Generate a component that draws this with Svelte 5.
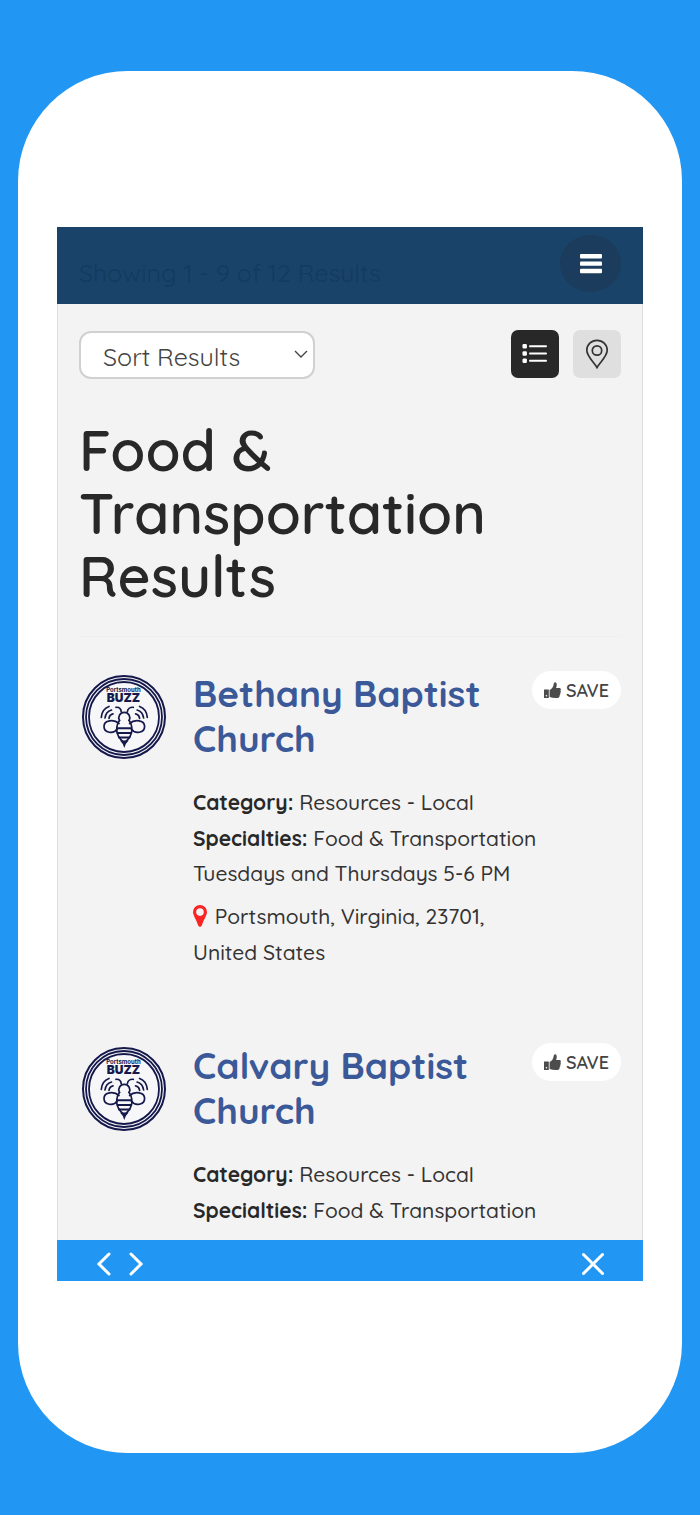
<script lang="ts">
	type Listing = {
		name: string;
		category: string;
		specialties: string;
		hours?: string;
		location?: string;
	};

	const listings: Listing[] = [
		{
			name: 'Bethany Baptist Church',
			category: 'Resources - Local',
			specialties: 'Food & Transportation',
			hours: 'Tuesdays and Thursdays 5-6 PM',
			location: 'Portsmouth, Virginia, 23701, United States'
		},
		{
			name: 'Calvary Baptist Church',
			category: 'Resources - Local',
			specialties: 'Food & Transportation'
		}
	];

	let view = $state('list');
	let saved = $state<string[]>([]);

	function toggleSave(name: string) {
		saved = saved.includes(name) ? saved.filter((n) => n !== name) : [...saved, name];
	}
</script>

<div class="page">
	<div class="phone">
		<div class="screen">
			<header class="topbar">
				<span class="count">Showing 1 - 9 of 12 Results</span>
				<button class="menu" aria-label="Open menu">
					<svg width="22" height="20" viewBox="0 0 22 20" fill="#fff">
						<rect width="22" height="4.4" rx="1" />
						<rect y="7.4" width="22" height="4.4" rx="1" />
						<rect y="14.8" width="22" height="4.4" rx="1" />
					</svg>
				</button>
			</header>

			<main class="content">
				<div class="toolbar">
					<div class="sort">
						<select aria-label="Sort results">
							<option>Sort Results</option>
							<option>Name A-Z</option>
							<option>Name Z-A</option>
						</select>
						<svg class="chevron" width="14" height="9" viewBox="0 0 14 9" fill="none" stroke="#444" stroke-width="1.4">
							<path d="M1 1l6 6L13 1" />
						</svg>
					</div>
					<div class="views">
						<button class="view" class:active={view === 'list'} aria-label="List view" onclick={() => (view = 'list')}>
							<svg width="26" height="20" viewBox="0 0 26 20" fill="currentColor">
								<rect x="0.5" y="0" width="4.4" height="4.4" rx="1.2" />
								<rect x="0.5" y="7.3" width="4.4" height="4.4" rx="1.2" />
								<rect x="0.5" y="14.6" width="4.4" height="4.4" rx="1.2" />
								<rect x="7" y="1.2" width="18" height="2" rx="1" />
								<rect x="7" y="8.5" width="18" height="2" rx="1" />
								<rect x="7" y="15.8" width="18" height="2" rx="1" />
							</svg>
						</button>
						<button class="view" class:active={view === 'map'} aria-label="Map view" onclick={() => (view = 'map')}>
							<svg width="24" height="30" viewBox="0 0 24 30" fill="none" stroke="currentColor" stroke-width="1.7">
								<path d="M12 28.500C9 23 1.800 17.500 1.800 11.300a10.200 10 0 0 1 20.400 0C22.200 17.500 15 23 12 28.500z" />
								<circle cx="12" cy="11.500" r="4.700" />
							</svg>
						</button>
					</div>
				</div>

				<h1>Food & Transportation Results</h1>

				<div class="listings">
					{#each listings as item (item.name)}
						<article class="listing">
							<svg class="logo" width="86" height="86" viewBox="0 0 86 86" fill="none" stroke="#15184a">
								<circle cx="43" cy="43" r="41" fill="#f7f7f9" stroke-width="2" />
								<circle cx="43" cy="43" r="38" stroke-width="1.8" />
								<circle cx="43" cy="43" r="35" stroke-width="1.8" />
								<g fill="#15184a" stroke="none" text-anchor="middle">
									<text class="logo-small" x="42.5" y="18">Portsmouth</text>
									<text class="logo-big" x="42.5" y="28">BUZZ</text>
								</g>
								<g stroke-width="1.7" stroke-linecap="round">
									<path d="M40.300 38C40 35 38 33 35 33.300M46.300 38c.3-3 2.700-5 6-4.700" />
									<path d="M38.500 46.500a5.500 5.500 0 1 1 9.600 0" />
									<path d="M38 49.500c-5-4.500-15-3.500-15 3s9.500 8 13.300 2.500M48.600 49.500c5-4.500 15-3.500 15 3s-9.500 8-13.300 2.500" />
									<path d="M38.500 46.500c-2 2.500-2.800 5-2.800 9.500 0 6 3.500 9.500 7.600 13 4.100-3.500 7.600-7 7.600-13 0-4.500-.8-7-2.800-9.500" />
									<path d="M36.500 54.300h13.600M36.500 59h13.600M38 63.500h10.600" stroke-width="1.900" />
									<path d="M28 44.300c.3-2.300 1.800-4 4-4.500M24 44c.5-4 2.800-6.900 6.500-8M20.300 43.300c.5-5.500 3.500-9.300 7.700-10.800" />
									<path d="M58.600 44.300c-.3-2.300-1.800-4-4-4.500M62.600 44c-.5-4-2.800-6.900-6.500-8M66.300 43.300c-.5-5.500-3.500-9.300-7.700-10.800" />
								</g>
								<path d="M39 66.500h8.600l-2.800 3.500-1.500 4-1.500-4z" fill="#15184a" stroke="none" />
							</svg>

							<div class="body">
								<h2><a href="#listing">{item.name}</a></h2>
								<p class="field"><strong>Category:</strong> {item.category}</p>
								<p class="field"><strong>Specialties:</strong> {item.specialties}</p>
								{#if item.hours}
									<p class="hours">{item.hours}</p>
								{/if}
								{#if item.location}
									<p class="location">
										<svg width="14" height="22" viewBox="0 0 14 22" fill="#fb2424">
											<path fill-rule="evenodd" d="M7 0a7 7 0 0 1 7 7c0 3.500-3.500 8-5 13-.7 2.400-3.300 2.400-4 0-1.500-5-5-9.500-5-13a7 7 0 0 1 7-7zM7 3.300a3.800 3.800 0 1 0 0 7.600 3.800 3.800 0 0 0 0-7.600z" />
										</svg>
										{item.location}
									</p>
								{/if}
							</div>

							<button class="save" aria-pressed={saved.includes(item.name)} onclick={() => toggleSave(item.name)}>
								<svg width="17" height="17" viewBox="0 0 17 17" fill="#4c4c4c">
									<path d="M0 7.500h4.800V16H0z" />
									<path d="M5.600 8c2.400-1.300 3.600-3.300 4-5.600.2-1.500.7-2.200 1.600-2.200 1.700 0 2 2.800.9 5.800h3.200c1.500 0 2.100 1.600 1.100 2.500.6.800.5 1.800-.2 2.400.4.900.1 1.700-.6 2.200.3 1.500-.5 2.800-2.200 2.800-3 .3-5.200-.1-7.800-1z" />
									<circle cx="2.400" cy="13.700" r=".8" fill="#fff" />
								</svg>
								SAVE
							</button>
						</article>
					{/each}
				</div>
			</main>

			<footer class="browserbar">
				<div class="history">
					<button aria-label="Back">
						<svg width="16" height="24" viewBox="0 0 16 24"><path d="M13 2L3 12l10 10" /></svg>
					</button>
					<button aria-label="Forward">
						<svg width="16" height="24" viewBox="0 0 16 24"><path d="M3 2l10 10L3 22" /></svg>
					</button>
				</div>
				<button aria-label="Close">
					<svg width="22" height="24" viewBox="0 0 22 24"><path d="M1.500 2.500l19 19M20.500 2.500l-19 19" /></svg>
				</button>
			</footer>
		</div>
	</div>
</div>

<style>
	:global(body) {
		margin: 0;
		background: #2196f3;
	}

	.page {
		box-sizing: border-box;
		min-height: 100vh;
		padding: 71px 18px 63px;
		font-family: Quicksand, Lato, sans-serif;
		color: #282828;
	}

	.phone {
		padding: 156px 39px 172px;
		background: #fff;
		border-radius: 110px;
	}

	.screen {
		background: #f3f3f3;
		box-shadow: inset 0 0 0 1px #ddd;
	}

	button {
		display: flex;
		align-items: center;
		justify-content: center;
		padding: 0;
		border: none;
		background: none;
		font-family: inherit;
		cursor: pointer;
	}

	.topbar {
		display: flex;
		align-items: center;
		justify-content: space-between;
		height: 77px;
		padding: 0 22px;
		box-sizing: border-box;
		background: #1a4369;
	}

	.count {
		padding-top: 14px;
		font-size: 25px;
		line-height: 32px;
		color: #123b61;
	}

	.menu {
		width: 61px;
		height: 57px;
		margin-bottom: 4px;
		border-radius: 50%;
		background: #1b3c5c;
	}

	.content {
		padding: 25px 22px 12px;
	}

	.toolbar {
		display: flex;
		align-items: center;
		justify-content: space-between;
		height: 50px;
	}

	.sort {
		position: relative;
		padding-top: 2px;
	}

	select {
		appearance: none;
		box-sizing: border-box;
		display: block;
		width: 236px;
		height: 48px;
		padding: 2px 22px 0;
		border: 2px solid #d0d0d0;
		border-radius: 12px;
		background: #fff;
		font-family: inherit;
		font-size: 25px;
		color: #444;
	}

	.chevron {
		position: absolute;
		top: 21px;
		right: 7px;
		pointer-events: none;
	}

	.views {
		display: flex;
		gap: 14px;
	}

	.view {
		width: 48px;
		height: 48px;
		border-radius: 7px;
		background: #dfdfdf;
		color: #333;
	}

	.view.active {
		background: #282828;
		color: #fff;
	}

	h1 {
		margin: 39px 0 0;
		padding-bottom: 29px;
		border-bottom: 1px solid #efefef;
		font-size: 57px;
		font-weight: 600;
		line-height: 63px;
	}

	.listings {
		display: flex;
		flex-direction: column;
		gap: 73px;
		padding-top: 34px;
	}

	.listing {
		display: grid;
		grid-template-columns: 86px minmax(0, 1fr) 89px;
		align-items: start;
		margin-left: 2px;
	}

	.logo {
		margin-top: 3px;
	}

	.logo-small {
		font: 700 6px Inter, sans-serif;
	}

	.logo-big {
		font: 900 12px Inter, sans-serif;
	}

	.body {
		padding-left: 26px;
	}

	h2 {
		margin: 0 0 23px;
		font-size: 37px;
		font-weight: 700;
		line-height: 45px;
	}

	h2 a {
		color: #3b5998;
		text-decoration: none;
	}

	p {
		margin: 0;
		font-size: 21px;
		font-weight: 500;
		line-height: 36px;
		color: #333;
	}

	.field {
		white-space: nowrap;
	}

	.hours {
		line-height: 34px;
		white-space: nowrap;
	}

	.location {
		margin-top: 8px;
	}

	.location svg {
		margin-right: 2px;
		vertical-align: -3px;
	}

	strong {
		font-weight: 700;
		color: #282828;
	}

	.save {
		gap: 5px;
		height: 38px;
		border-radius: 19px;
		background: #fff;
		font-size: 18px;
		font-weight: 600;
		color: #444;
	}

	.browserbar {
		display: flex;
		align-items: center;
		justify-content: space-between;
		height: 41px;
		padding: 6px 39px 0;
		box-sizing: border-box;
		background: #2196f3;
	}

	.history {
		display: flex;
		gap: 16px;
	}

	.browserbar svg {
		fill: none;
		stroke: #fff;
		stroke-width: 3;
		stroke-linecap: round;
	}
</style>
